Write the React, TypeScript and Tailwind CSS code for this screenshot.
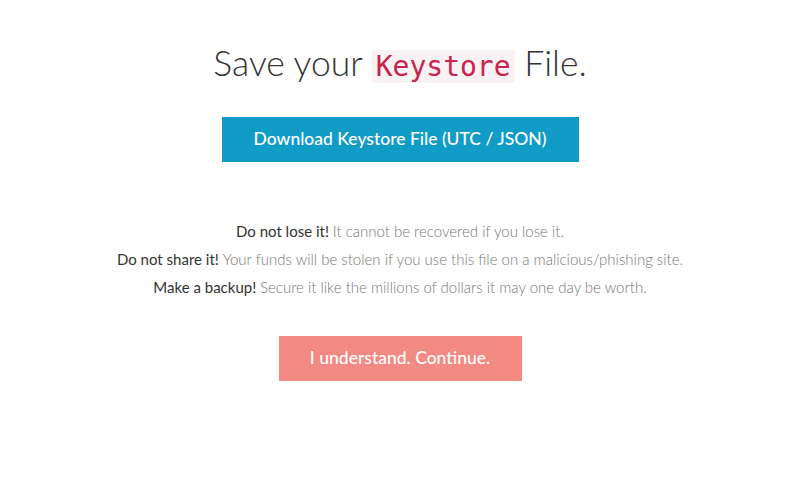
export default function App() {
  return (
    <div className="min-h-screen bg-white font-['Lato','Noto_Sans',sans-serif] text-[#333]">
      <div className="flex flex-col items-center pt-[38px]">
        <h1 className="text-[35.5px] font-light leading-[50px] text-[#333]">
          Save your{' '}
          <code className="rounded-[3px] bg-[#f9f2f4] px-[4px] font-['DejaVu_Sans_Mono',monospace] text-[28px] text-[#c7254e]">
            Keystore
          </code>{' '}
          File.
        </h1>

        <button className="mt-[25px] h-[45px] w-[357px] bg-[#119cc7] text-[17.5px] font-medium text-white">
          Download Keystore File (UTC / JSON)
        </button>

        <div className="mt-[60px] flex flex-col items-center gap-[8.5px] text-[15px] leading-[19.5px]">
          <p>
            <span className="font-normal text-[#333]">Do not lose it!</span>{' '}
            <span className="font-light text-[#777]">It cannot be recovered if you lose it.</span>
          </p>
          <p>
            <span className="font-normal text-[#333]">Do not share it!</span>{' '}
            <span className="font-light text-[#777]">
              Your funds will be stolen if you use this file on a malicious/phishing site.
            </span>
          </p>
          <p>
            <span className="font-normal text-[#333]">Make a backup!</span>{' '}
            <span className="font-light text-[#777]">
              Secure it like the millions of dollars it may one day be worth.
            </span>
          </p>
        </div>

        <button className="mt-[38.5px] h-[45px] w-[243px] bg-[#f28a83] text-[17.5px] font-medium text-white">
          I understand. Continue.
        </button>
      </div>
    </div>
  );
}
